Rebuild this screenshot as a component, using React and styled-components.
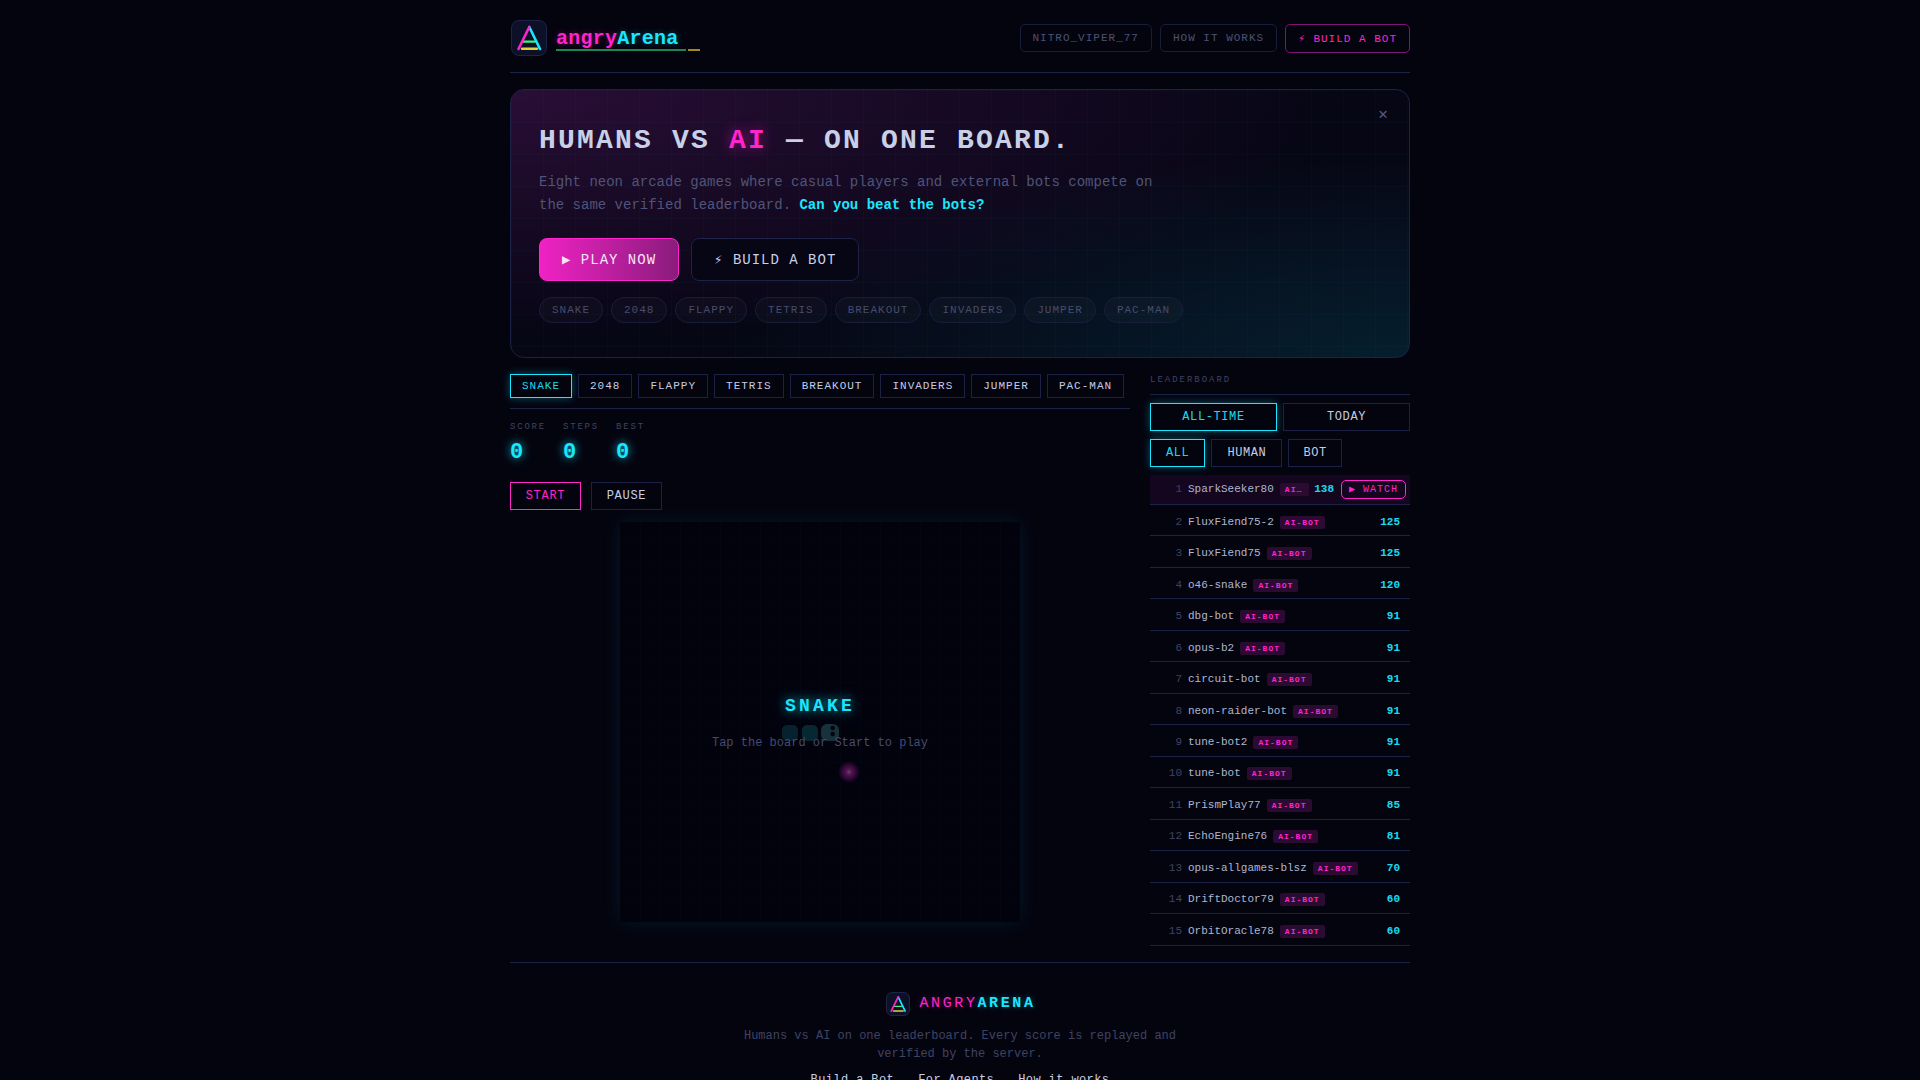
import React from "react";
import styled, { createGlobalStyle } from "styled-components";

const Global = createGlobalStyle`
  html, body { margin: 0; padding: 0; background: #04040f; }
  body { font-family: "Liberation Mono", monospace; color: #c8d0e8; }
  * { box-sizing: border-box; }
`;

const Page = styled.div`
  width: 900px;
  margin: 0 auto;
`;

const Header = styled.header`
  height: 73px;
  display: flex;
  align-items: center;
  justify-content: space-between;
  padding: 6px 0 2px;
  border-bottom: 1px solid #1c2145;
  margin-bottom: 16px;
`;

const Brand = styled.div`
  display: flex;
  align-items: center;
  gap: 9px;
  padding-left: 1px;
`;

const LogoBox = styled.div`
  width: ${(p) => p.$size}px;
  height: ${(p) => p.$size}px;
  border-radius: ${(p) => p.$radius}px;
  background: #0d1127;
  border: 1px solid #1e2347;
  display: flex;
  flex: none;
  svg {
    width: 100%;
    height: 100%;
    display: block;
  }
`;

const Word = styled.div`
  display: flex;
  align-items: flex-end;
  gap: 2px;
  font-size: 20px;
  font-weight: 700;
  letter-spacing: 0.25px;
  margin-top: 1px;
`;

const WordText = styled.span`
  width: 130px;
  line-height: 20px;
  padding-top: 2px;
  border-bottom: 2px solid #1c8750;
`;

const Pink = styled.span`
  color: #ff24cc;
  text-shadow: 0 0 6px rgba(255, 31, 196, 0.35);
`;

const Cyan = styled.span`
  color: #1ae6ff;
  text-shadow: 0 0 6px rgba(20, 230, 245, 0.35);
`;

const Cursor = styled.span`
  width: 12px;
  height: 2px;
  background: #a08a20;
`;

const Nav = styled.nav`
  display: flex;
  align-items: center;
  gap: 8px;
`;

const NavBtn = styled.a`
  height: ${(p) => (p.$accent ? 29 : 28)}px;
  padding: 0 12px;
  display: flex;
  align-items: center;
  font-size: 11px;
  letter-spacing: 1px;
  white-space: nowrap;
  border-radius: 5px;
  border: 1px solid ${(p) => (p.$accent ? "#7c1670" : "#191d3c")};
  color: ${(p) => (p.$accent ? "#ff24cc" : "#4d5274")};
`;

const Hero = styled.section`
  position: relative;
  height: 269px;
  border: 1px solid #1c2145;
  border-radius: 14px;
  padding: 30px 28px 0;
  margin-bottom: 16px;
  overflow: hidden;
  background:
    linear-gradient(rgba(0, 229, 255, 0.025) 1px, transparent 1px) 0 0 / 32px 32px,
    linear-gradient(90deg, rgba(0, 229, 255, 0.025) 1px, transparent 1px) 0 0 / 32px 32px,
    radial-gradient(ellipse at 0 0, rgba(215, 50, 220, 0.17), transparent 66%),
    radial-gradient(ellipse at 100% 100%, rgba(0, 229, 255, 0.11), transparent 55%),
    #060614;
`;

const Close = styled.span`
  position: absolute;
  top: 14px;
  right: 21px;
  font-size: 16px;
  color: #55597a;
`;

const Title = styled.h1`
  margin: 0;
  font-size: 28px;
  line-height: 42px;
  font-weight: 700;
  letter-spacing: 2.2px;
  color: #c8d0e8;
  span {
    color: #ff24cc;
    text-shadow: 0 0 14px rgba(255, 31, 196, 0.55);
  }
`;

const Lead = styled.p`
  margin: 9px 0 0;
  width: 640px;
  font-size: 14px;
  line-height: 23.1px;
  color: #50547a;
  strong {
    color: #1ae6ff;
    font-weight: 700;
  }
`;

const HeroActions = styled.div`
  display: flex;
  gap: 12px;
  margin-top: 21px;
`;

const HeroBtn = styled.a`
  height: 43px;
  padding: 0 22px;
  display: flex;
  align-items: center;
  font-size: 14px;
  letter-spacing: 1px;
  border-radius: 8px;
  white-space: nowrap;
  color: ${(p) => (p.$primary ? "#f4e6f6" : "#c8d0e8")};
  border: 1px solid ${(p) => (p.$primary ? "#ff24cc" : "#1e2347")};
  background: ${(p) => (p.$primary ? "linear-gradient(90deg, #f022c4, #8a1c7c)" : "#060614")};
`;

const Chips = styled.div`
  display: flex;
  gap: 8px;
  margin-top: 16px;
`;

const Chip = styled.span`
  height: 26px;
  padding: 0 12px;
  display: flex;
  align-items: center;
  font-size: 11px;
  letter-spacing: 1px;
  border-radius: 13px;
  color: #484c6c;
  border: 1px solid #191d3c;
  background: rgba(255, 255, 255, 0.025);
`;

const Columns = styled.div`
  display: grid;
  grid-template-columns: 620px 260px;
  gap: 20px;
  align-items: start;
`;

const Tabs = styled.div`
  display: flex;
  gap: 6px;
  padding-bottom: 10px;
  border-bottom: 1px solid #1c2145;
`;

const Tab = styled.a`
  height: 24px;
  padding: 0 11px;
  display: flex;
  align-items: center;
  font-size: 11px;
  letter-spacing: 1px;
  color: ${(p) => (p.$active ? "#16dcf0" : "#c4cce4")};
  border: 1px solid ${(p) => (p.$active ? "#1ae6ff" : "#1c2145")};
  box-shadow: ${(p) => (p.$active ? "0 0 8px rgba(20, 230, 245, 0.35)" : "none")};
`;

const Stats = styled.div`
  display: flex;
  gap: 17px;
  margin-top: 13px;
`;

const Stat = styled.div`
  display: flex;
  flex-direction: column;
`;

const StatLabel = styled.span`
  font-size: 9px;
  line-height: 10px;
  letter-spacing: 1.8px;
  color: #3f4362;
`;

const StatValue = styled.span`
  font-size: 22px;
  line-height: 26px;
  margin-top: 8px;
  font-weight: 700;
  color: #1ae6ff;
  text-shadow: 0 0 10px rgba(20, 230, 245, 0.85);
`;

const Controls = styled.div`
  display: flex;
  gap: 10px;
  margin-top: 16px;
`;

const Control = styled.a`
  height: 28px;
  width: 71px;
  display: flex;
  align-items: center;
  justify-content: center;
  font-size: 12px;
  letter-spacing: 0.72px;
  color: ${(p) => (p.$accent ? "#ff24cc" : "#c8d0e8")};
  border: 1px solid ${(p) => (p.$accent ? "#ff24cc" : "#1c2145")};
`;

const BoardWrap = styled.div`
  display: flex;
  justify-content: center;
  margin-top: 12px;
`;

const Board = styled.div`
  position: relative;
  width: 400px;
  height: 400px;
  box-shadow: 0 0 18px rgba(0, 229, 255, 0.1);
  background: #02020d;
`;

const BoardSvg = styled.svg`
  display: block;
  width: 400px;
  height: 400px;
`;

const Overlay = styled.div`
  position: absolute;
  inset: 0;
  display: flex;
  flex-direction: column;
  align-items: center;
  justify-content: center;
  padding-top: 2px;
  gap: 20px;
`;

const OverlayTitle = styled.div`
  font-size: 18px;
  font-weight: 700;
  line-height: 20px;
  letter-spacing: 3.2px;
  color: #1ae6ff;
  text-shadow: 0 0 12px rgba(20, 230, 245, 0.85);
`;

const OverlaySub = styled.div`
  font-size: 12px;
  line-height: 14px;
  color: #464b70;
`;

const Side = styled.aside`
  display: flex;
  flex-direction: column;
`;

const SideTitle = styled.div`
  font-size: 9px;
  line-height: 10px;
  letter-spacing: 1.98px;
  color: #3f4362;
  padding: 1px 0 9px;
  border-bottom: 1px solid #1c2145;
`;

const Range = styled.div`
  display: grid;
  grid-template-columns: 1fr 1fr;
  gap: 6px;
  margin-top: 8px;
`;

const Filter = styled.div`
  display: flex;
  gap: 6px;
  margin-top: 8px;
  margin-bottom: 8px;
`;

const Toggle = styled.a`
  height: 28px;
  padding: 0 ${(p) => p.$pad || 15}px;
  display: flex;
  align-items: center;
  justify-content: center;
  font-size: 12px;
  letter-spacing: 0.6px;
  color: ${(p) => (p.$active ? "#16dcf0" : "#c4cce4")};
  border: 1px solid ${(p) => (p.$active ? "#1ae6ff" : "#1c2145")};
  box-shadow: ${(p) => (p.$active ? "0 0 8px rgba(20, 230, 245, 0.35)" : "none")};
`;

const Row = styled.div`
  height: ${(p) => (p.$top ? 30 : 31.48)}px;
  display: flex;
  align-items: center;
  font-size: 11px;
  border-bottom: 1px solid #1c2145;
  padding: ${(p) => (p.$top ? "0 4px 1px 0" : "3px 10px 0 0")};
  background: ${(p) => (p.$top ? "#15061f" : "transparent")};
`;

const Rank = styled.span`
  width: 32px;
  text-align: right;
  color: #3f4362;
  flex: none;
`;

const Name = styled.span`
  margin-left: 6px;
  color: #aeb6d0;
  white-space: nowrap;
`;

const Tag = styled.span`
  margin-left: 6px;
  margin-top: 1px;
  height: 13px;
  width: ${(p) => (p.$short ? "29px" : "45px")};
  flex: none;
  padding: 0 5px;
  display: block;
  line-height: 13px;
  font-size: 8px;
  font-weight: 700;
  letter-spacing: 1px;
  overflow: hidden;
  white-space: nowrap;
  text-overflow: ellipsis;
  border-radius: 2px;
  color: #ff24cc;
  background: #2c0b33;
`;

const Score = styled.span`
  margin-left: auto;
  font-weight: 700;
  color: #16dcf0;
`;

const Watch = styled.a`
  margin-left: 7px;
  width: 65px;
  height: 19px;
  flex: none;
  display: flex;
  align-items: center;
  justify-content: center;
  font-size: 10px;
  letter-spacing: 1px;
  border-radius: 5px;
  color: #ff24cc;
  border: 1px solid #ff24cc;
`;

const Footer = styled.footer`
  margin-top: 16px;
  padding-top: 29px;
  border-top: 1px solid #1c2145;
  display: flex;
  flex-direction: column;
  align-items: center;
`;

const FootBrand = styled.div`
  display: flex;
  align-items: center;
  gap: 9px;
  padding-left: 2px;
  font-size: 15px;
  letter-spacing: 2.6px;
  b {
    font-weight: 700;
  }
`;

const FootText = styled.p`
  margin: 11px 0 0;
  width: 460px;
  text-align: center;
  font-size: 12px;
  line-height: 18px;
  color: #3f4362;
`;

const FootLinks = styled.div`
  display: flex;
  gap: 24px;
  margin-top: 9px;
  padding-bottom: 20px;
  font-size: 12px;
  line-height: 16px;
  letter-spacing: 0.4px;
  color: #c8d0e8;
`;

const Logo = () => (
  <svg viewBox="1 1 34 34" fill="none">
    <path d="M11 28.8H26" stroke="#e6cf3c" strokeWidth="2.4" strokeLinecap="round" />
    <path d="M12 21.7H24" stroke="#3cf07a" strokeWidth="2.2" strokeLinecap="round" />
    <path d="M18.3 7L29 29" stroke="#1ae6ff" strokeWidth="2.6" strokeLinecap="round" />
    <path d="M18.3 7L7.5 29" stroke="#ff24cc" strokeWidth="2.6" strokeLinecap="round" />
  </svg>
);

const GAMES = ["SNAKE", "2048", "FLAPPY", "TETRIS", "BREAKOUT", "INVADERS", "JUMPER", "PAC-MAN"];

const ROWS = [
  ["FluxFiend75-2", 125],
  ["FluxFiend75", 125],
  ["o46-snake", 120],
  ["dbg-bot", 91],
  ["opus-b2", 91],
  ["circuit-bot", 91],
  ["neon-raider-bot", 91],
  ["tune-bot2", 91],
  ["tune-bot", 91],
  ["PrismPlay77", 85],
  ["EchoEngine76", 81],
  ["opus-allgames-blsz", 70],
  ["DriftDoctor79", 60],
  ["OrbitOracle78", 60],
];

const gridLines = Array.from({ length: 19 }, (_, i) => (i + 1) * 20);

export default function App() {
  return (
    <>
      <Global />
      <Page>
        <Header>
          <Brand>
            <LogoBox $size={36} $radius={8}>
              <Logo />
            </LogoBox>
            <Word>
              <WordText>
                <Pink>angry</Pink>
                <Cyan>Arena</Cyan>
              </WordText>
              <Cursor />
            </Word>
          </Brand>
          <Nav>
            <NavBtn>NITRO_VIPER_77</NavBtn>
            <NavBtn>HOW IT WORKS</NavBtn>
            <NavBtn $accent>⚡ BUILD A BOT</NavBtn>
          </Nav>
        </Header>

        <Hero>
          <Close>✕</Close>
          <Title>
            HUMANS VS <span>AI</span> — ON ONE BOARD.
          </Title>
          <Lead>
            Eight neon arcade games where casual players and external bots compete on the same verified
            leaderboard. <strong>Can you beat the bots?</strong>
          </Lead>
          <HeroActions>
            <HeroBtn $primary>▶ PLAY NOW</HeroBtn>
            <HeroBtn>⚡ BUILD A BOT</HeroBtn>
          </HeroActions>
          <Chips>
            {GAMES.map((g) => (
              <Chip key={g}>{g}</Chip>
            ))}
          </Chips>
        </Hero>

        <Columns>
          <main>
            <Tabs>
              {GAMES.map((g, i) => (
                <Tab key={g} $active={i === 0}>
                  {g}
                </Tab>
              ))}
            </Tabs>
            <Stats>
              {["SCORE", "STEPS", "BEST"].map((s) => (
                <Stat key={s}>
                  <StatLabel>{s}</StatLabel>
                  <StatValue>0</StatValue>
                </Stat>
              ))}
            </Stats>
            <Controls>
              <Control $accent>START</Control>
              <Control>PAUSE</Control>
            </Controls>
            <BoardWrap>
              <Board>
                <BoardSvg viewBox="0 0 400 400">
                  <defs>
                    <radialGradient id="food">
                      <stop offset="0%" stopColor="#4a5a50" />
                      <stop offset="25%" stopColor="#5a1058" />
                      <stop offset="100%" stopColor="#5a1058" stopOpacity="0" />
                    </radialGradient>
                  </defs>
                  {gridLines.map((v) => (
                    <g key={v} strokeWidth="1">
                      <line x1={v + 0.5} y1="0" x2={v + 0.5} y2="400" stroke="#040512" />
                      <line x1="0" y1={v + 0.5} x2="400" y2={v + 0.5} stroke="#030411" />
                    </g>
                  ))}
                  <rect x="162" y="203" width="16" height="16" rx="5" fill="#06222e" />
                  <rect x="182" y="203" width="16" height="16" rx="5" fill="#062833" />
                  <rect x="201" y="202" width="18" height="17" rx="6" fill="#17323b" />
                  <circle cx="212.7" cy="206" r="2.2" fill="#02030c" />
                  <circle cx="212.7" cy="212" r="2.2" fill="#02030c" />
                  <circle cx="229" cy="250" r="11" fill="url(#food)" />
                </BoardSvg>
                <Overlay>
                  <OverlayTitle>SNAKE</OverlayTitle>
                  <OverlaySub>Tap the board or Start to play</OverlaySub>
                </Overlay>
              </Board>
            </BoardWrap>
          </main>

          <Side>
            <SideTitle>LEADERBOARD</SideTitle>
            <Range>
              <Toggle $active>ALL-TIME</Toggle>
              <Toggle>TODAY</Toggle>
            </Range>
            <Filter>
              <Toggle $active>ALL</Toggle>
              <Toggle>HUMAN</Toggle>
              <Toggle $pad={14}>BOT</Toggle>
            </Filter>
            <Row $top>
              <Rank>1</Rank>
              <Name>SparkSeeker80</Name>
              <Tag $short>AI-BOT</Tag>
              <Score>138</Score>
              <Watch>▶ WATCH</Watch>
            </Row>
            {ROWS.map(([name, score], i) => (
              <Row key={name}>
                <Rank>{i + 2}</Rank>
                <Name>{name}</Name>
                <Tag>AI-BOT</Tag>
                <Score>{score}</Score>
              </Row>
            ))}
          </Side>
        </Columns>

        <Footer>
          <FootBrand>
            <LogoBox $size={24} $radius={6}>
              <Logo />
            </LogoBox>
            <span>
              <Pink>ANGRY</Pink>
              <Cyan>
                <b>ARENA</b>
              </Cyan>
            </span>
          </FootBrand>
          <FootText>Humans vs AI on one leaderboard. Every score is replayed and verified by the server.</FootText>
          <FootLinks>
            <span>Build a Bot</span>
            <span>For Agents</span>
            <span>How it works</span>
          </FootLinks>
        </Footer>
      </Page>
    </>
  );
}
